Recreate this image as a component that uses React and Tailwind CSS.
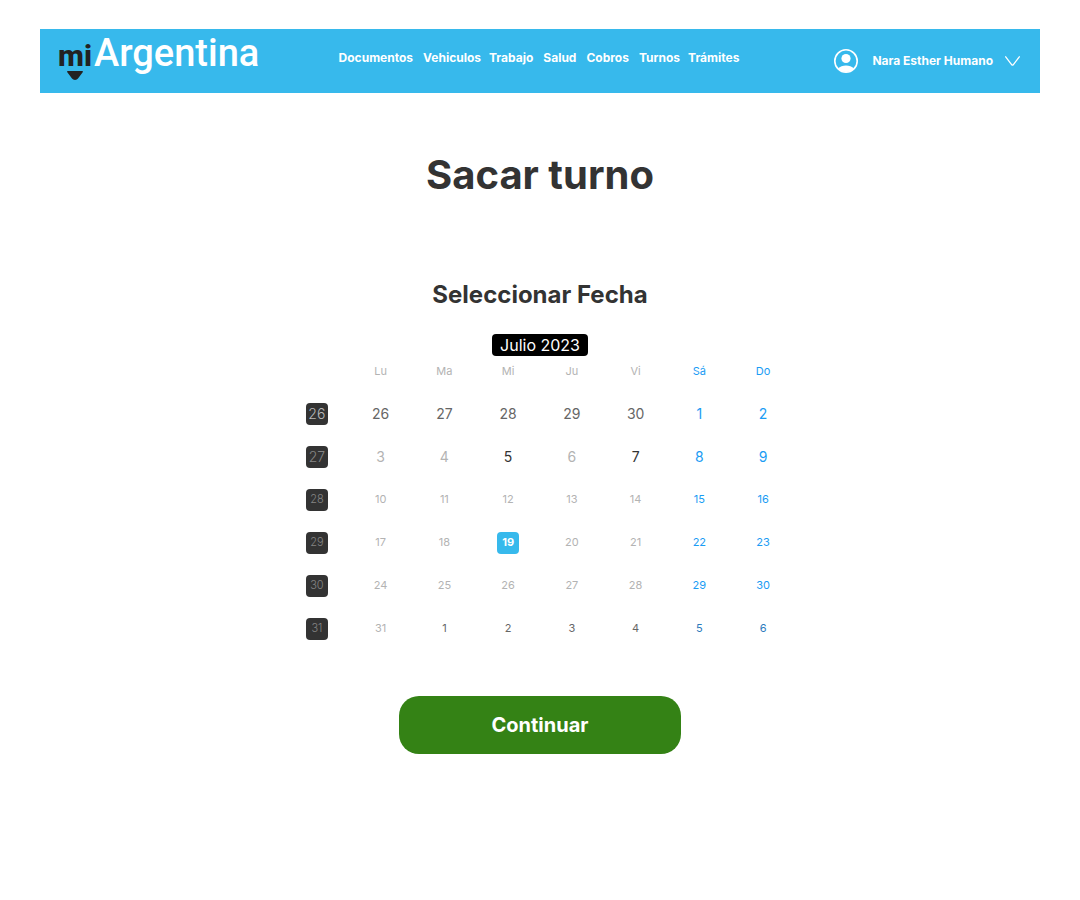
import React from "react";

const links = [
  { label: "Documentos", gap: "" },
  { label: "Vehiculos", gap: "ml-2.5" },
  { label: "Trabajo", gap: "ml-2" },
  { label: "Salud", gap: "ml-2.5" },
  { label: "Cobros", gap: "ml-2.5" },
  { label: "Turnos", gap: "ml-2.5" },
  { label: "Trámites", gap: "ml-2" },
];

const dayNames = ["Lu", "Ma", "Mi", "Ju", "Vi", "Sá", "Do"];

const muted = "text-[#b3b3b3]";
const open = "text-[#333333]";
const adjacent = "text-[#666666]";
const weekend = "text-[#1a9cf4]";
const nextWeekend = "text-[#2b7bbd]";

const weeks = [
  { number: 26, large: true, tone: "text-[#b8b8b8]", days: [26, 27, 28, 29, 30, 1, 2], tones: [adjacent, adjacent, adjacent, adjacent, adjacent, weekend, weekend] },
  { number: 27, large: true, tone: "text-[#858585]", days: [3, 4, 5, 6, 7, 8, 9], tones: [muted, muted, open, muted, open, weekend, weekend] },
  { number: 28, tone: "text-[#858585]", days: [10, 11, 12, 13, 14, 15, 16], tones: [muted, muted, muted, muted, muted, weekend, weekend] },
  { number: 29, tone: "text-[#858585]", days: [17, 18, 19, 20, 21, 22, 23], tones: [muted, muted, "selected", muted, muted, weekend, weekend] },
  { number: 30, tone: "text-[#858585]", days: [24, 25, 26, 27, 28, 29, 30], tones: [muted, muted, muted, muted, muted, weekend, weekend] },
  { number: 31, tone: "text-[#858585]", days: [31, 1, 2, 3, 4, 5, 6], tones: [muted, adjacent, adjacent, adjacent, adjacent, nextWeekend, nextWeekend] },
];

function Logo() {
  return (
    <a href="#inicio" className="relative flex items-baseline justify-self-start font-['Roboto','Noto_Sans',sans-serif] leading-[48px]">
      <span className="mr-0.5 text-[30px] font-extrabold text-[#222222]">mi</span>
      <span className="text-[38px] font-medium text-white">Argentina</span>
      <svg viewBox="0 0 16 9" className="absolute left-[9px] top-[42px] h-[9px] w-4" aria-hidden="true">
        <path d="M.8 0h14.4c.8 0 1 .7.5 1.200L11 7.600Q10 9 8 9T5 7.600L.3 1.200C-.2.700 0 0 .8 0Z" fill="#222222" />
      </svg>
    </a>
  );
}

function Header() {
  return (
    <header className="grid h-16 grid-cols-[1fr_auto_1fr] items-start bg-[#37b9ec] pl-[18px] pr-5 text-white">
      <Logo />
      <nav aria-label="Principal" className="flex pt-5 text-[12px] font-bold leading-[18px]">
        {links.map((link) => (
          <a key={link.label} href={"#" + link.label.toLowerCase()} className={link.gap}>
            {link.label}
          </a>
        ))}
      </nav>
      <button type="button" className="flex h-16 items-center justify-self-end text-[12px] font-bold">
        <svg viewBox="0 0 24 24" className="mr-3.5 size-6" aria-hidden="true">
          <circle cx="12" cy="12" r="11.200" fill="none" stroke="white" strokeWidth="1.600" />
          <circle cx="12" cy="9.500" r="4.600" fill="white" />
          <path d="M4 19.300C6 17.400 8.900 16.400 12 16.400s6 1 8 2.900A11.500 11.500 0 0 1 12 23a11.500 11.500 0 0 1-8-3.700Z" fill="white" />
        </svg>
        Nara Esther Humano
        <svg viewBox="0 0 15 10" className="ml-3 h-2.5 w-[15px]" fill="none" stroke="white" strokeWidth="1.300" strokeLinecap="round" strokeLinejoin="round" aria-hidden="true">
          <path d="M.7.800 6.800 8.800q.7.800 1.400 0L14.300.800" />
        </svg>
      </button>
    </header>
  );
}

function Calendar() {
  return (
    <table className="w-full max-w-[510px] table-fixed border-collapse text-center">
      <caption className="pb-1">
        <span className="inline-block rounded bg-black px-2 text-[16px] leading-[22px] text-white">Julio 2023</span>
      </caption>
      <thead>
        <tr className="h-[31px] text-[11px] leading-5">
          <td />
          {dayNames.map((name, i) => (
            <th key={name} scope="col" className={"p-0 align-top font-normal " + (i > 4 ? weekend : muted)}>
              {name}
            </th>
          ))}
        </tr>
      </thead>
      <tbody>
        {weeks.map((week) => (
          <tr key={week.number} className={week.large ? "h-[43px] text-[14px]" : "h-[43px] text-[11px]"}>
            <th scope="row" className="p-0 font-light">
              <span className={"mx-auto flex size-[22px] items-center justify-center rounded bg-[#333333] " + week.tone}>
                {week.number}
              </span>
            </th>
            {week.days.map((day, i) => (
              <td key={i} className="p-0">
                <button
                  type="button"
                  className={
                    "mx-auto flex size-[22px] items-center justify-center rounded " +
                    (week.tones[i] === "selected" ? "bg-[#37b9ec] font-bold text-white" : week.tones[i])
                  }
                >
                  {day}
                </button>
              </td>
            ))}
          </tr>
        ))}
      </tbody>
    </table>
  );
}

export default function App() {
  return (
    <div className="min-h-screen bg-white px-10 pt-[29px] font-['Inter',sans-serif]">
      <Header />
      <main className="flex flex-col items-center pt-[58px] text-[#333333]">
        <h1 className="text-[40px] font-bold leading-[48px]">Sacar turno</h1>
        <h2 className="mb-[22px] mt-20 text-[24px] font-bold leading-8">Seleccionar Fecha</h2>
        <Calendar />
        <button type="button" className="mt-[46px] h-[58px] w-[282px] rounded-[20px] bg-[#348215] text-[20px] font-bold text-white">
          Continuar
        </button>
      </main>
    </div>
  );
}
